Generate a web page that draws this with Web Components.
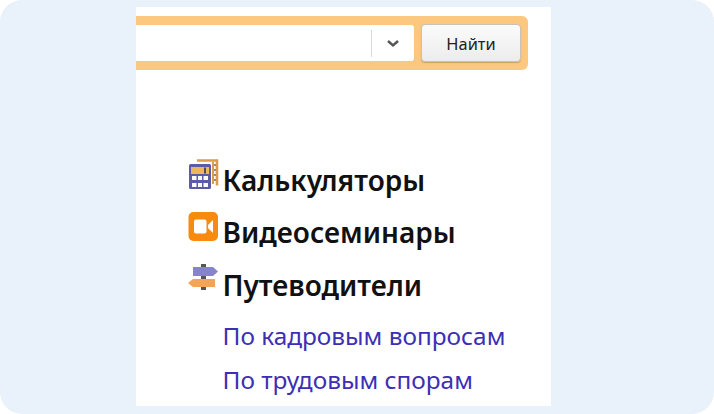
<!DOCTYPE html>
<html lang="ru">
<head>
<meta charset="utf-8">
<style>
  html, body { margin: 0; background: #fff; }
  body { font-family: "Noto Sans", sans-serif; }
</style>
</head>
<body>
<app-frame>
  <search-bar></search-bar>
  <nav-list>
    <nav-head icon="calc">Калькуляторы</nav-head>
    <nav-head icon="video">Видеосеминары</nav-head>
    <nav-head icon="sign">Путеводители</nav-head>
    <nav-link>По кадровым вопросам</nav-link>
    <nav-link>По трудовым спорам</nav-link>
  </nav-list>
</app-frame>
<script>
class AppFrame extends HTMLElement {
  connectedCallback() {
    this.attachShadow({ mode: 'open' });
    this.shadowRoot.innerHTML = `
      <style>
        :host { display: block; width: 714px; height: 414px; box-sizing: border-box;
          padding: 7px 163px 8px 136px; background: #e9f1fa; border-radius: 22px; }
        .panel { height: 100%; background: #fff; padding-top: 9px; box-sizing: border-box; overflow: hidden; }
      </style>
      <div class="panel"><slot></slot></div>
    `;
  }
}

class SearchBar extends HTMLElement {
  connectedCallback() {
    this.attachShadow({ mode: 'open' });
    this.shadowRoot.innerHTML = `
      <style>
        :host { display: flex; width: 392px; height: 54px; box-sizing: border-box; gap: 7px;
          padding: 8px 7px 8px 0; background: #fcc77f; border-radius: 0 6px 6px 0; }
        .input { flex: 1; display: flex; align-items: center; justify-content: flex-end;
          background: #fff; border-radius: 0 3px 3px 0; margin: 1px 0; }
        .sep { width: 1px; height: 27px; background: #d9d9d9; }
        .arrow { width: 42px; display: flex; justify-content: center; }
        button { width: 100px; padding: 0; font: 16.4px "Noto Sans", sans-serif; color: #222;
          background: linear-gradient(#fbfbfb, #ececec); border: 1px solid #c9c2b6; border-radius: 4px;
          box-shadow: 0 1px 1px rgba(120, 90, 40, .35); }
      </style>
      <div class="input">
        <div class="sep"></div>
        <div class="arrow">
          <svg width="14" height="9" viewBox="0 0 14 9"><path d="M2 2l5 4.5L12 2" fill="none" stroke="#555" stroke-width="2.4"/></svg>
        </div>
      </div>
      <button>Найти</button>
    `;
  }
}

class NavList extends HTMLElement {
  connectedCallback() {
    this.attachShadow({ mode: 'open' });
    this.shadowRoot.innerHTML = `
      <style>
        :host { display: block; padding: 89px 0 0 52px; }
      </style>
      <slot></slot>
    `;
  }
}

const ICONS = {
  calc: `<svg width="31" height="30" viewBox="0 0 31 30">
      <path d="M9 1.5h20v25" fill="none" stroke="#dc9c48" stroke-width="2.6"/>
      <path d="M25 3v22" stroke="#dc9c48" stroke-width="2"/>
      <path d="M26 6h2M26 11h2M26 16h2M26 21h2" stroke="#8a6a3a" stroke-width="1.6"/>
      <rect x="1" y="5" width="22" height="25" rx="1.5" fill="#5d5ba8"/>
      <rect x="3" y="8" width="18" height="7" fill="#f0b45c"/>
      <rect x="16" y="8.5" width="2" height="6" fill="#5a4a50"/>
      <g fill="#fff">
        <rect x="4" y="17" width="4.5" height="4"/><rect x="10" y="17" width="4" height="4"/><rect x="15.5" y="17" width="4.5" height="4"/>
        <rect x="4" y="24" width="4.5" height="4"/><rect x="10" y="24" width="4" height="4"/><rect x="15.5" y="24" width="4.5" height="4"/>
      </g>
    </svg>`,
  video: `<svg width="30" height="30" viewBox="0 0 30 30">
      <rect x="0.5" y="0" width="29.5" height="29" rx="5" fill="#f88a10"/>
      <rect x="6" y="7.5" width="12.5" height="14" rx="2" fill="#fff"/>
      <path d="M20 13l5-5v13l-5-5z" fill="#fff"/>
    </svg>`,
  sign: `<svg width="31" height="30" viewBox="0 0 31 30">
      <rect x="13" y="0" width="5" height="26" fill="#555"/>
      <path d="M5 3h20l5 4.5-5 4.5H5z" fill="#8584cc"/>
      <path d="M27 15H5L0 19l5 4h22z" fill="#f5a354"/>
    </svg>`
};

class NavHead extends HTMLElement {
  connectedCallback() {
    const icon = ICONS[this.getAttribute('icon')];
    this.attachShadow({ mode: 'open' });
    this.shadowRoot.innerHTML = `
      <style>
        :host { display: flex; height: 52.7px; font: 600 28px/36px "Noto Sans", sans-serif; color: #111; }
        .icon { width: 34.5px; flex: none; }
        span { padding-top: 2.5px; }
      </style>
      <div class="icon">${icon}</div>
      <span><slot></slot></span>
    `;
  }
}

class NavLink extends HTMLElement {
  connectedCallback() {
    this.attachShadow({ mode: 'open' });
    this.shadowRoot.innerHTML = `
      <style>
        :host { display: block; padding-left: 34.5px; font: 24.4px/44px "Noto Sans", sans-serif; color: #3d2fb5; }
        :host(:first-of-type) { margin-top: -3px; }
      </style>
      <slot></slot>
    `;
  }
}

customElements.define('app-frame', AppFrame);
customElements.define('search-bar', SearchBar);
customElements.define('nav-list', NavList);
customElements.define('nav-head', NavHead);
customElements.define('nav-link', NavLink);
</script>
</body>
</html>
